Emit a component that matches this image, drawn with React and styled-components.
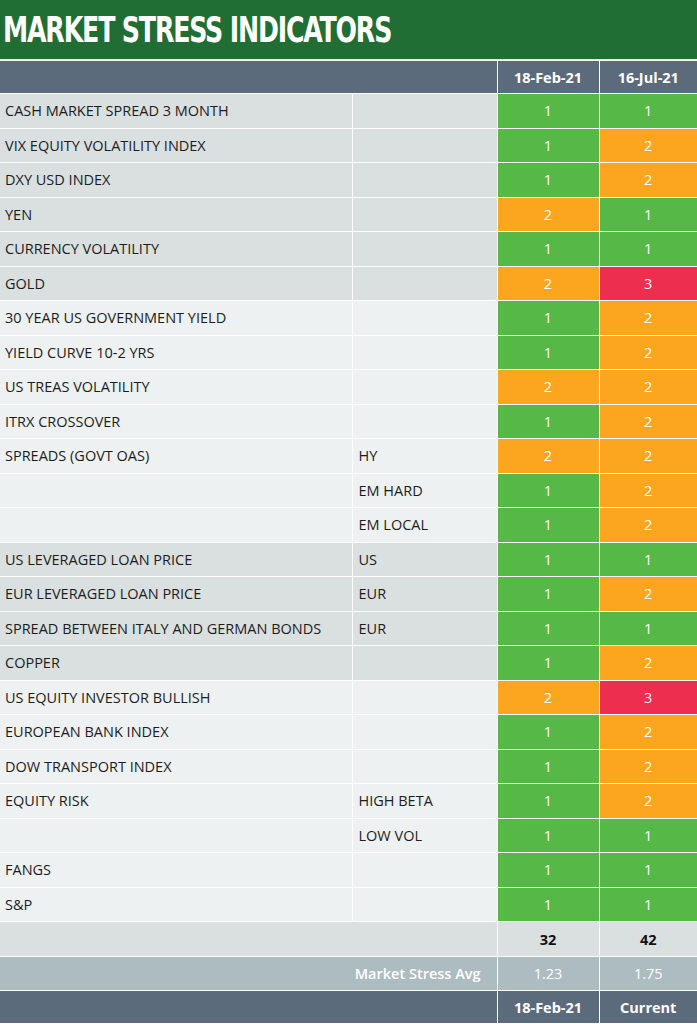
import React from "react";
import styled, { createGlobalStyle } from "styled-components";

const Global = createGlobalStyle`
  body { margin: 0; font-family: "Open Sans", "Liberation Sans", sans-serif; background: #fff; }
`;

const Page = styled.div`
  width: 697px;
`;

const TitleBar = styled.div`
  height: 60px;
  background: #216e34;
  display: flex;
  align-items: center;
  padding-left: 3px;
  box-sizing: border-box;
  border-bottom: 1px solid #e8ecec;
`;

const Title = styled.h1`
  margin: 0;
  color: #fff;
  font-family: "DejaVu Sans Condensed", "DejaVu Sans", sans-serif;
  font-weight: bold;
  font-size: 36px;
  letter-spacing: -1.5px;
  transform: scaleX(0.78);
  transform-origin: left center;
  white-space: nowrap;
`;

const Table = styled.table`
  width: 697px;
  border-collapse: collapse;
  table-layout: fixed;
`;

const Row = styled.tr`
  height: ${(p) => p.$h || 34.5}px;
  background: ${(p) => p.$bg};
`;

const Cell = styled.td`
  border: 1px solid #fff;
  border-left: none;
  padding: 0 0 0 5px;
  font-size: 14.5px;
  color: #1d1d1d;
  white-space: nowrap;
`;

const Sub = styled(Cell)`
  padding-left: 6px;
  border-right: none;
`;

const Score = styled.td`
  border: 1px solid #fff;
  border-right: none;
  text-align: center;
  color: ${(p) => p.$color || "#fff"};
  font-size: 14.5px;
  font-weight: ${(p) => (p.$bold ? 700 : 400)};
  background: ${(p) => p.$bg || "transparent"};
`;

const colors = { 1: "#56b847", 2: "#fca51e", 3: "#ee2e4f" };
const DARK = "#5b6b7c";
const GREY = "#dadfe0";
const LIGHT = "#eef1f2";

const rows = [
  ["CASH MARKET SPREAD 3 MONTH", "", 1, 1, GREY],
  ["VIX EQUITY VOLATILITY INDEX", "", 1, 2, GREY],
  ["DXY USD INDEX", "", 1, 2, GREY],
  ["YEN", "", 2, 1, GREY],
  ["CURRENCY VOLATILITY", "", 1, 1, GREY],
  ["GOLD", "", 2, 3, GREY],
  ["30 YEAR US GOVERNMENT YIELD", "", 1, 2, LIGHT],
  ["YIELD CURVE 10-2 YRS", "", 1, 2, LIGHT],
  ["US TREAS VOLATILITY", "", 2, 2, LIGHT],
  ["ITRX CROSSOVER", "", 1, 2, LIGHT],
  ["SPREADS (GOVT OAS)", "HY", 2, 2, LIGHT],
  ["", "EM HARD", 1, 2, LIGHT],
  ["", "EM LOCAL", 1, 2, LIGHT],
  ["US LEVERAGED LOAN PRICE", "US", 1, 1, GREY],
  ["EUR LEVERAGED LOAN PRICE", "EUR", 1, 2, GREY],
  ["SPREAD BETWEEN ITALY AND GERMAN BONDS", "EUR", 1, 1, GREY],
  ["COPPER", "", 1, 2, GREY],
  ["US EQUITY INVESTOR BULLISH", "", 2, 3, LIGHT],
  ["EUROPEAN BANK INDEX", "", 1, 2, LIGHT],
  ["DOW TRANSPORT INDEX", "", 1, 2, LIGHT],
  ["EQUITY RISK", "HIGH BETA", 1, 2, LIGHT],
  ["", "LOW VOL", 1, 1, LIGHT],
  ["FANGS", "", 1, 1, LIGHT],
  ["S&P", "", 1, 1, LIGHT],
];

export default function App() {
  return (
    <Page>
      <Global />
      <TitleBar>
        <Title>MARKET STRESS INDICATORS</Title>
      </TitleBar>
      <Table>
        <colgroup>
          <col style={{ width: 352 }} />
          <col style={{ width: 145 }} />
          <col style={{ width: 102 }} />
          <col style={{ width: 98 }} />
        </colgroup>
        <tbody>
          <Row $bg={DARK} $h={33}>
            <Cell colSpan={2} />
            <Score $bold>18-Feb-21</Score>
            <Score $bold>16-Jul-21</Score>
          </Row>
          {rows.map(([label, sub, a, b, bg], i) => (
            <Row key={i} $bg={bg}>
              <Cell>{label}</Cell>
              <Sub>{sub}</Sub>
              <Score $bg={colors[a]}>{a}</Score>
              <Score $bg={colors[b]}>{b}</Score>
            </Row>
          ))}
          <Row $bg={GREY} $h={35}>
            <Cell colSpan={2} />
            <Score $color="#111" $bold>32</Score>
            <Score $color="#111" $bold>42</Score>
          </Row>
          <Row $bg="#adbcc1" $h={34}>
            <Cell colSpan={2} style={{ textAlign: "right", paddingRight: 16 }}>
              <span style={{ color: "#fff", fontWeight: 600 }}>Market Stress Avg</span>
            </Cell>
            <Score>1.23</Score>
            <Score>1.75</Score>
          </Row>
          <Row $bg={DARK} $h={33}>
            <Cell colSpan={2} />
            <Score $bold>18-Feb-21</Score>
            <Score $bold>Current</Score>
          </Row>
        </tbody>
      </Table>
    </Page>
  );
}
